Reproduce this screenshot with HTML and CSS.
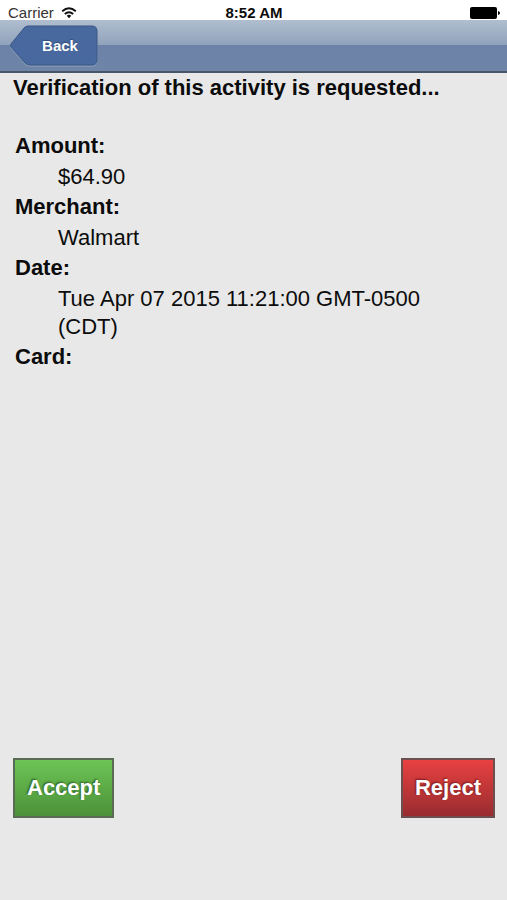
FILE: index.html
```html
<!DOCTYPE html>
<html lang="en">
<head>
<meta charset="utf-8">
<meta name="viewport" content="width=device-width, initial-scale=1">
<title>Verification</title>
<link rel="stylesheet" href="styles.css">
</head>
<body>
<div class="screen">
  <div class="status">
    <div class="status-left">
      <span>Carrier</span>
      <svg class="wifi" width="16" height="12" viewBox="0 0 16 12" aria-hidden="true">
        <path d="M1.200 4.300Q8-1.700 14.800 4.300M3.800 7Q8 3.400 12.200 7" fill="none" stroke="#111" stroke-width="1.900"/>
        <path d="M5.700 8.700Q8 6.800 10.300 8.700L8 11.200Z" fill="#111"/>
      </svg>
    </div>
    <span class="time">8:52 AM</span>
    <div class="status-right">
      <svg width="30" height="12" viewBox="0 0 30 12" aria-hidden="true">
        <rect x="0" y="0" width="27" height="12" rx="2"/>
        <path d="M28 4Q30 4.500 30 6T28 8Z"/>
      </svg>
    </div>
  </div>
  <header class="navbar">
    <button class="back" type="button">
      <svg class="back-shape" width="90" height="42" viewBox="0 0 90 42" aria-hidden="true">
        <defs>
          <linearGradient id="backFill" x1="0" y1="0" x2="0" y2="1">
            <stop offset="0" stop-color="#48699e"/>
            <stop offset="1" stop-color="#4868a0"/>
          </linearGradient>
        </defs>
        <path d="M19 2H83Q88 2 88 7V36Q88 41 83 41H21Q18 41 16 39L2 23Q1 21 2 20L15 4Q17 2 19 2Z" fill="none" stroke="#a3b4cd" stroke-opacity=".7"/>
        <path d="M19 1H83Q88 1 88 6V35Q88 40 83 40H21Q18 40 16 38L2 22Q1 20 2 19L15 3Q17 1 19 1Z" fill="url(#backFill)" stroke="#3b5884"/>
      </svg>
      <span class="back-label">Back</span>
    </button>
  </header>
  <main class="content">
    <h1>Verification of this activity is requested...</h1>
    <dl>
      <dt>Amount:</dt>
      <dd>$64.90</dd>
      <dt>Merchant:</dt>
      <dd>Walmart</dd>
      <dt>Date:</dt>
      <dd>Tue Apr 07 2015 11:21:00 GMT-0500 (CDT)</dd>
      <dt>Card:</dt>
    </dl>
    <div class="actions">
      <button class="action accept" type="button">Accept</button>
      <button class="action reject" type="button">Reject</button>
    </div>
  </main>
</div>
</body>
</html>
```
FILE: styles.css
```css
* {
  box-sizing: border-box;
}

body {
  margin: 0;
  background: #e8e8e8;
  color: #0c0c0c;
  font-family: "Liberation Sans", Arial, Helvetica, sans-serif;
  font-size: 22px;
  line-height: 28px;
}

.screen {
  display: flex;
  flex-direction: column;
  min-height: 100vh;
}

.status {
  display: grid;
  grid-template-columns: 1fr auto 1fr;
  align-items: end;
  height: 20px;
  padding: 0 7px 0 8px;
  background: #fff;
  font-size: 15px;
  line-height: 14px;
}

.status svg {
  display: block;
}

.status-left {
  display: flex;
  align-items: center;
  gap: 7px;
  color: #333;
}

.time {
  font-size: 15px;
  font-weight: bold;
}

.status-right {
  display: flex;
  justify-content: flex-end;
  padding-bottom: 1px;
}

.navbar {
  display: flex;
  align-items: center;
  height: 53px;
  padding: 0 9px;
  background: linear-gradient(#b0becf, #8fa1bb 50%, #6c82a8 50%, #6e85a7);
  border-bottom: 2px solid #48566a;
}

.back {
  position: relative;
  width: 90px;
  height: 42px;
  padding: 0 0 0 12px;
  border: 0;
  background: none;
  color: #fff;
  font: bold 15px/20px "Liberation Sans", Arial, sans-serif;
  text-shadow: 0 -1px 1px #2f4a75;
}

.back-shape {
  position: absolute;
  inset: 0;
}

.back-label {
  position: relative;
}

.content {
  display: flex;
  flex: 1;
  flex-direction: column;
  padding: 1px 12px 82px 13px;
}

h1 {
  margin: 0 0 28px;
  font-size: 22px;
  line-height: 28px;
}

dl {
  margin: 0 3px 0 2px;
}

dt {
  margin-top: 2px;
  font-weight: bold;
}

dd {
  margin: 3px 20px 0 43px;
}

.actions {
  display: flex;
  justify-content: space-between;
  margin-top: auto;
}

.action {
  height: 60px;
  padding: 0 12px;
  border: 2px solid #656565;
  color: #fff;
  font: bold 22px/28px "Liberation Sans", Arial, sans-serif;
}

.accept {
  border-color: #5a6b55;
  background: linear-gradient(#6cc455, #4c9139);
  text-shadow: -1px -1px 2px #2c5c20;
}

.reject {
  border-color: #6e4f50;
  background: linear-gradient(#e94141, #982c2f);
  text-shadow: -1px -1px 2px #7a1c1c;
}
```
